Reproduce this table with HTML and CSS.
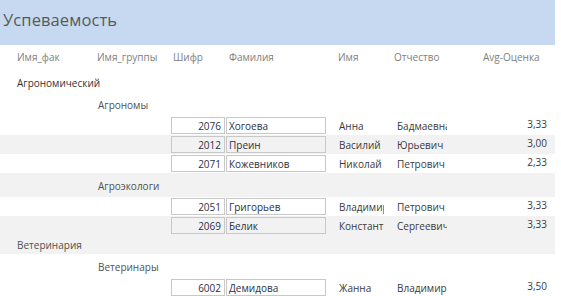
FILE: index.html
```html
<!DOCTYPE html>
<html lang="ru">
<head>
    <meta charset="UTF-8">
    <title>Успеваемость</title>
    <link rel="stylesheet" href="styles.css">
</head>
<body>
    <div class="report">
        <!-- Report header -->
        <div class="title-band">
            <h1>Успеваемость</h1>
        </div>

        <!-- Page header: field captions -->
        <div class="row page-header">
            <span class="cap">Имя_фак</span>
            <span class="cap">Имя_группы</span>
            <span class="cap cap-code">Шифр</span>
            <span class="cap cap-surname">Фамилия</span>
            <span class="cap cap-name">Имя</span>
            <span class="cap cap-patr">Отчество</span>
            <span class="cap cap-avg">Avg-Оценка</span>
        </div>

        <!-- Faculty: Агрономический -->
        <div class="row fac-header">
            <span class="fac">Агрономический</span>
        </div>

        <div class="row group-header">
            <span class="group">Агрономы</span>
        </div>
        <div class="row detail">
            <span class="box code">2076</span>
            <span class="box surname">Хогоева</span>
            <span class="name">Анна</span>
            <span class="patr">Бадмаевна</span>
            <span class="avg">3,33</span>
        </div>
        <div class="row detail alt">
            <span class="box code">2012</span>
            <span class="box surname">Преин</span>
            <span class="name">Василий</span>
            <span class="patr">Юрьевич</span>
            <span class="avg">3,00</span>
        </div>
        <div class="row detail">
            <span class="box code">2071</span>
            <span class="box surname">Кожевников</span>
            <span class="name">Николай</span>
            <span class="patr">Петрович</span>
            <span class="avg">2,33</span>
        </div>

        <div class="row group-header alt">
            <span class="group">Агроэкологи</span>
        </div>
        <div class="row detail">
            <span class="box code">2051</span>
            <span class="box surname">Григорьев</span>
            <span class="name">Владимир</span>
            <span class="patr">Петрович</span>
            <span class="avg">3,33</span>
        </div>
        <div class="row detail alt">
            <span class="box code">2069</span>
            <span class="box surname">Белик</span>
            <span class="name">Константин</span>
            <span class="patr">Сергеевич</span>
            <span class="avg">3,33</span>
        </div>

        <!-- Faculty: Ветеринария -->
        <div class="row fac-header alt">
            <span class="fac">Ветеринария</span>
        </div>

        <div class="row group-header">
            <span class="group">Ветеринары</span>
        </div>
        <div class="row detail">
            <span class="box code">6002</span>
            <span class="box surname">Демидова</span>
            <span class="name">Жанна</span>
            <span class="patr">Владимировна</span>
            <span class="avg">3,50</span>
        </div>
    </div>
</body>
</html>
```

FILE: styles.css
```css
body {
    margin: 0;
    font-family: "Open Sans", "Noto Sans", sans-serif;
    font-size: 10px;
    background: #fff;
}
.report {
    width: 555px;
}
.title-band {
    background: #c6d9f0;
    height: 45px;
    display: flex;
    align-items: center;
}
.title-band h1 {
    margin: 0 0 6px 3px;
    font-size: 16.5px;
    font-weight: normal;
    color: #595959;
    letter-spacing: 0.1px;
}

/* every band shares the same column grid */
.row {
    display: grid;
    grid-template-columns: 80px 74px 55px 110px 57px 57px 1fr;
    padding-left: 17px;
    align-items: center;
    white-space: nowrap;
}
.row.alt {
    background: #f2f2f2;
}

.page-header {
    height: 28px;
    align-items: start;
    padding-top: 5px;
    box-sizing: border-box;
}
.cap {
    color: #808080;
}
.cap-code {
    grid-column: 3;
    padding-left: 2px;
}
.cap-surname {
    grid-column: 4;
    padding-left: 3px;
}
.cap-name {
    grid-column: 5;
    padding-left: 2px;
}
.cap-patr {
    grid-column: 6;
    padding-left: 1px;
}
.cap-avg {
    grid-column: 7;
    padding-left: 33px;
}

.fac-header {
    height: 19px;
}
.fac {
    grid-column: 1 / 3;
    color: #333;
}
.alt .fac {
    color: #505050;
}

.group-header {
    height: 24px;
    align-items: end;
    padding-bottom: 4px;
    box-sizing: border-box;
}
.group {
    grid-column: 2 / 4;
    color: #505050;
    padding-left: 1px;
}

.detail {
    height: 19px;
}
.box {
    height: 17px;
    line-height: 16px;
    border: 1px solid #c8c8c8;
    box-sizing: border-box;
    color: #2a3244;
    overflow: hidden;
}
.code {
    grid-column: 3;
    width: 54px;
    text-align: right;
    padding-right: 3px;
}
.surname {
    grid-column: 4;
    width: 100px;
    padding-left: 2px;
}
.name {
    grid-column: 5;
    padding-left: 3px;
    width: 45px;
    overflow: hidden;
    color: #3a3a3a;
}
.patr {
    grid-column: 6;
    padding-left: 4px;
    width: 50px;
    overflow: hidden;
    color: #3a3a3a;
}
.avg {
    grid-column: 7;
    text-align: right;
    padding-right: 8px;
    color: #3a3a3a;
    align-self: start;
    padding-top: 1px;
}
```
